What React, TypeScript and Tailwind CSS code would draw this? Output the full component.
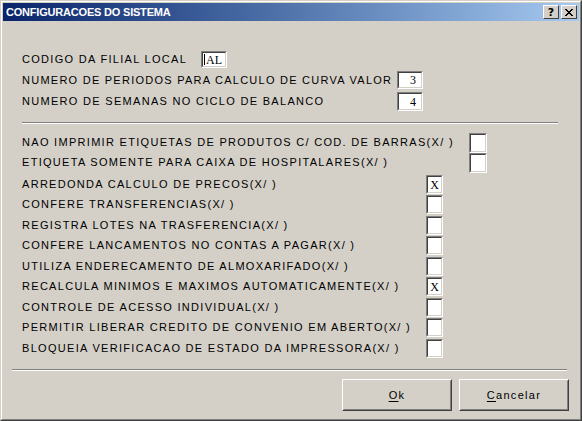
import React from "react";

const labelFont = { fontFamily: '"Liberation Sans", Arial, sans-serif' };

function Sunken({ className, children }: { className: string; children?: React.ReactNode }) {
  return (
    <div className={`border border-t-[#808080] border-l-[#808080] border-b-white border-r-white ${className}`}>
      <div className="w-full h-full border border-t-[#404040] border-l-[#404040] border-b-[#d4d0c8] border-r-[#d4d0c8] bg-white flex items-center font-['Liberation_Serif',serif] text-[12px] leading-none text-black">
        {children}
      </div>
    </div>
  );
}

function Sep({ className }: { className: string }) {
  return (
    <div className={`h-[2px] border-t border-t-[#808080] border-b border-b-white ${className}`} />
  );
}

function RaisedBtn({ children }: { children: React.ReactNode }) {
  return (
    <div className="w-[110px] h-[32px] border border-t-white border-l-white border-b-[#404040] border-r-[#404040]">
      <div className="w-full h-full border border-t-[#d4d0c8] border-l-[#d4d0c8] border-b-[#808080] border-r-[#808080] flex items-center justify-center text-[11px] tracking-[1.3px] text-black font-['Liberation_Sans',Arial,sans-serif]">
        {children}
      </div>
    </div>
  );
}

const checks: { label: string; checked: boolean; h: string }[] = [
  { label: "ARREDONDA CALCULO DE PRECOS(X/ )", checked: true, h: "h-[20px]" },
  { label: "CONFERE TRANSFERENCIAS(X/ )", checked: false, h: "h-[21px]" },
  { label: "REGISTRA LOTES NA TRASFERENCIA(X/ )", checked: false, h: "h-[20px]" },
  { label: "CONFERE LANCAMENTOS NO CONTAS A PAGAR(X/ )", checked: false, h: "h-[21px]" },
  { label: "UTILIZA ENDERECAMENTO DE ALMOXARIFADO(X/ )", checked: false, h: "h-[20px]" },
  { label: "RECALCULA MINIMOS E MAXIMOS AUTOMATICAMENTE(X/ )", checked: true, h: "h-[21px]" },
  { label: "CONTROLE DE ACESSO INDIVIDUAL(X/ )", checked: false, h: "h-[20px]" },
  { label: "PERMITIR LIBERAR CREDITO DE CONVENIO EM ABERTO(X/ )", checked: false, h: "h-[21px]" },
  { label: "BLOQUEIA VERIFICACAO DE ESTADO DA IMPRESSORA(X/ )", checked: false, h: "h-[20px]" },
];

export default function App() {
  return (
    <div className="w-[582px] h-[421px] bg-[#d4d0c8] border border-t-[#d4d0c8] border-l-[#d4d0c8] border-b-[#404040] border-r-[#404040]" style={labelFont}>
      <div className="w-full h-full border border-t-white border-l-white border-b-[#808080] border-r-[#808080] p-px flex flex-col">
        {/* Title bar */}
        <div className="h-[18px] shrink-0 flex items-center bg-gradient-to-r from-[#0a246a] to-[#a6caf0] pl-[3px] pr-[2px]">
          <span className="text-white font-bold text-[11px] tracking-[-0.2px] leading-none flex-1">CONFIGURACOES DO SISTEMA</span>
          <div className="flex gap-[2px]">
            <div className="w-[16px] h-[14px] bg-[#d4d0c8] border border-t-white border-l-white border-b-[#404040] border-r-[#404040] flex items-center justify-center">
              <span className="text-black font-bold text-[11px] leading-none font-['DejaVu_Sans',sans-serif]">?</span>
            </div>
            <div className="w-[16px] h-[14px] bg-[#d4d0c8] border border-t-white border-l-white border-b-[#404040] border-r-[#404040] flex items-center justify-center">
              <svg width="8" height="7" viewBox="0 0 8 7" shapeRendering="crispEdges">
                <path d="M0 0h2v1H0zM6 0h2v1H6zM1 1h2v1H1zM5 1h2v1H5zM2 2h4v1H2zM3 3h2v1H3zM2 4h4v1H2zM1 5h2v1H1zM5 5h2v1H5zM0 6h2v1H0zM6 6h2v1H6z" fill="#000" />
              </svg>
            </div>
          </div>
        </div>

        {/* Content */}
        <div className="flex-1 flex flex-col text-[11px] tracking-[1.3px] text-black leading-none">
          <div className="pl-[19px] pt-[30px] flex flex-col">
            <div className="flex items-center h-[17px]">
              <span className="w-[179px] shrink-0">CODIGO DA FILIAL LOCAL</span>
              <Sunken className="w-[26px] h-[17px]">
                <span className="w-px h-[11px] bg-black ml-[1px]" />
                <span className="tracking-[0px] ml-px">AL</span>
              </Sunken>
            </div>
            <div className="flex items-center h-[18px] mt-[3px]">
              <span className="w-[375px] shrink-0 tracking-[1.25px]">NUMERO DE PERIODOS PARA CALCULO DE CURVA VALOR</span>
              <Sunken className="w-[26px] h-[18px]">
                <span className="w-full text-right pr-[5px] tracking-normal">3</span>
              </Sunken>
            </div>
            <div className="flex items-center h-[19px] mt-[3px]">
              <span className="w-[375px] shrink-0">NUMERO DE SEMANAS NO CICLO DE BALANCO</span>
              <Sunken className="w-[26px] h-[19px]">
                <span className="w-full text-right pr-[5px] tracking-normal">4</span>
              </Sunken>
            </div>
            <Sep className="w-[536px] mt-[11px]" />

            <div className="mt-[9px] flex flex-col">
              <div className="flex h-[20px]">
                <span className="w-[447px] shrink-0 h-[19px] flex items-center">NAO IMPRIMIR ETIQUETAS DE PRODUTOS C/ COD. DE BARRAS(X/ )</span>
                <Sunken className="w-[18px] h-[20px]" />
              </div>
              <div className="flex h-[20px]">
                <span className="w-[447px] shrink-0 h-[19px] flex items-center">ETIQUETA SOMENTE PARA CAIXA DE HOSPITALARES(X/ )</span>
                <Sunken className="w-[18px] h-[20px]" />
              </div>
            </div>

            <div className="mt-[2px] flex flex-col">
              {checks.map((c) => (
                <div key={c.label} className={`flex ${c.h}`}>
                  <span className="w-[404px] shrink-0 h-[18px] flex items-center">{c.label}</span>
                  <Sunken className="w-[17px] h-[19px]">
                    {c.checked ? <span className="w-full text-center tracking-normal text-[12px]">X</span> : null}
                  </Sunken>
                </div>
              ))}
            </div>
          </div>

          <Sep className="w-[555px] ml-[9px] mt-[10px]" />

          <div className="flex justify-end gap-[7px] pr-[10px] mt-[8px]">
            <RaisedBtn>
              <span><span className="underline underline-offset-2">O</span>k</span>
            </RaisedBtn>
            <RaisedBtn>
              <span><span className="underline underline-offset-2">C</span>ancelar</span>
            </RaisedBtn>
          </div>
        </div>
      </div>
    </div>
  );
}
